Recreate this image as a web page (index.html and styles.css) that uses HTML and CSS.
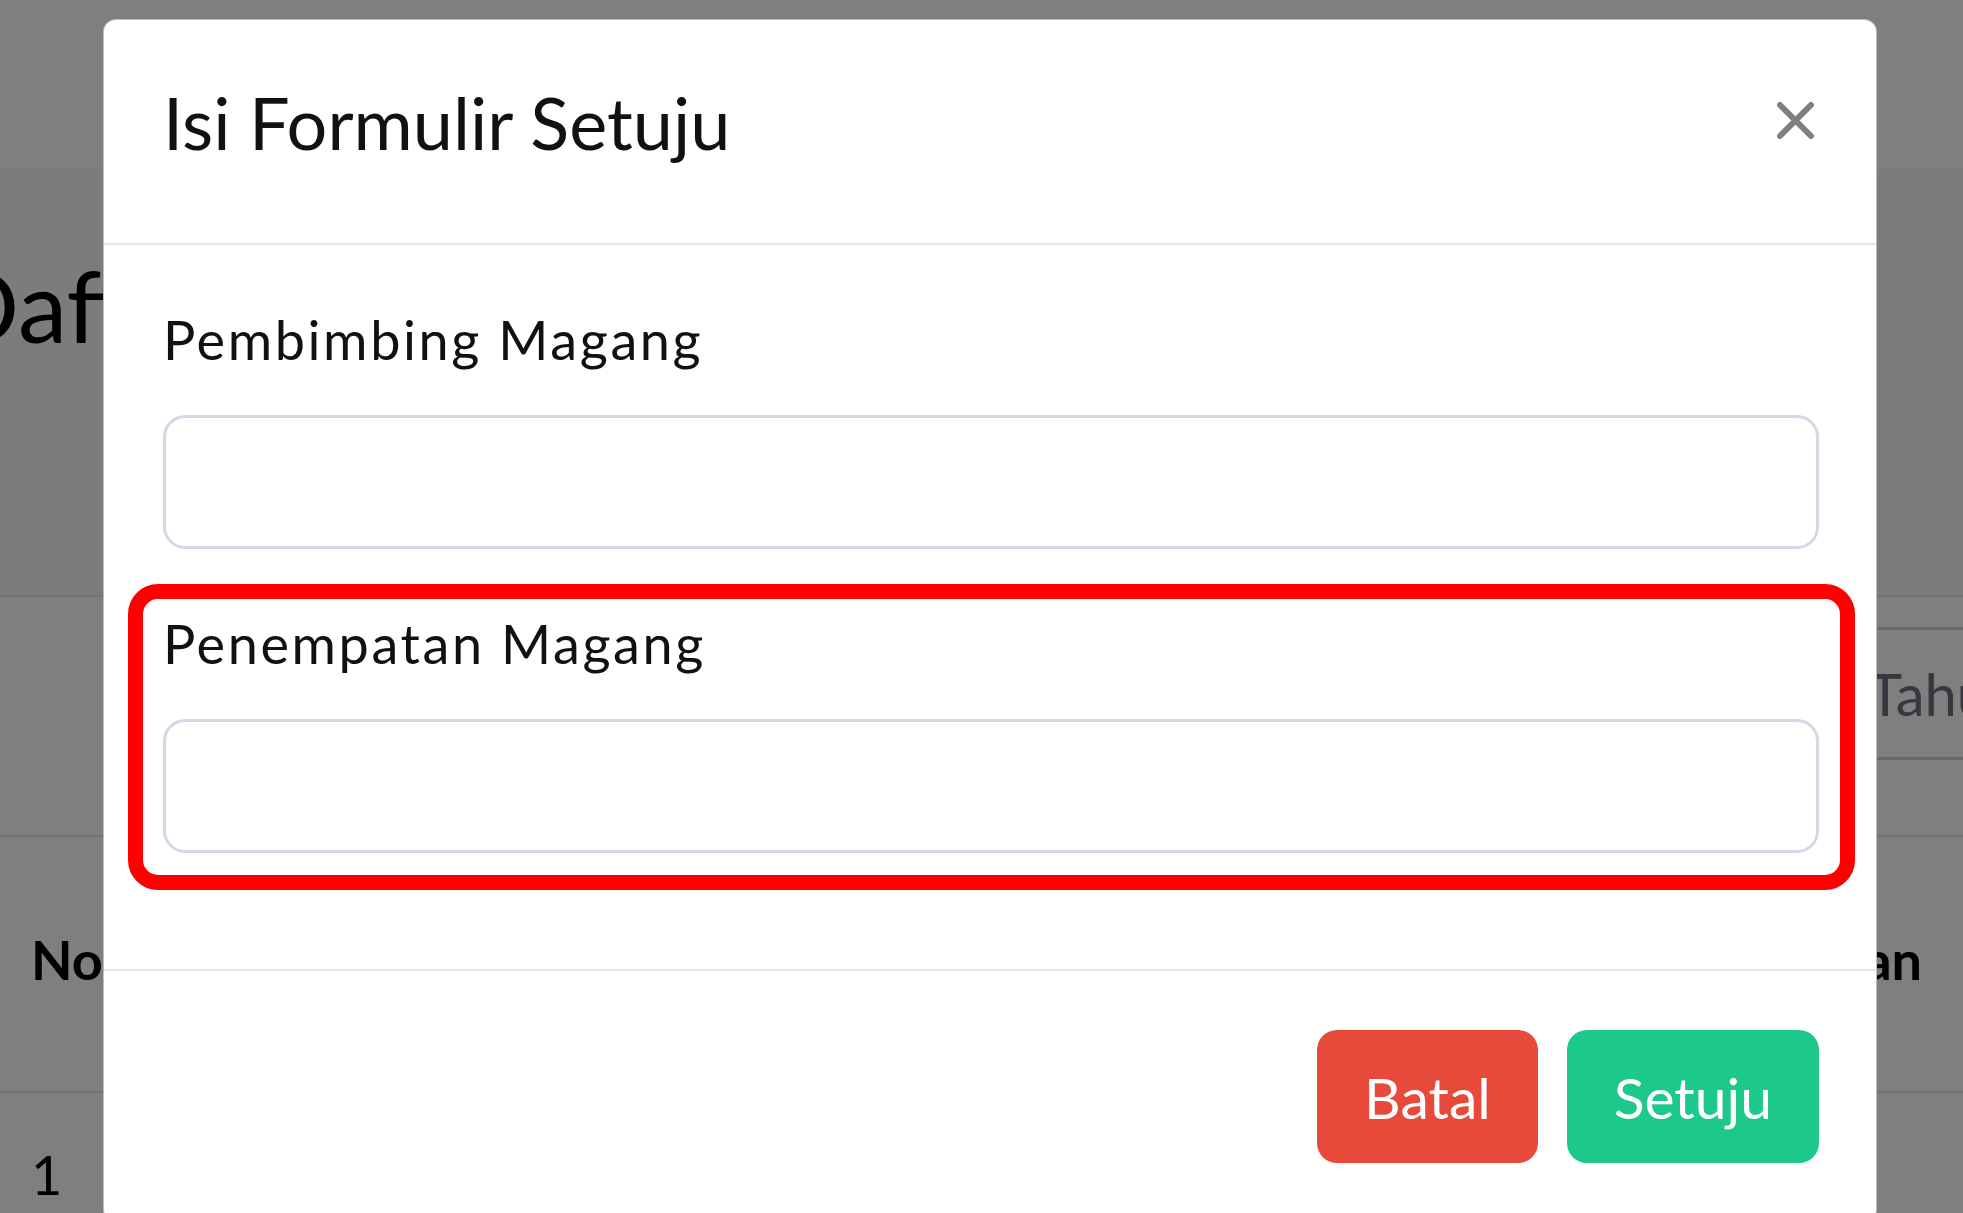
FILE: index.html
```html
<!DOCTYPE html>
<html lang="id">
<head>
<meta charset="utf-8">
<title>Isi Formulir Setuju</title>
<link rel="stylesheet" href="styles.css">
</head>
<body>
<div class="bg-page">
  <div class="topbar"></div>
  <div class="heading">
    <h1 class="page-title">Daftar Pengajuan Magang</h1>
  </div>
  <div class="card">
    <div class="card-filters">
      <div class="fake-select">Tahun</div>
    </div>
    <div class="table">
      <div class="thead">
        <div class="th th-no">No</div>
        <div class="th-spacer"></div>
        <div class="th th-last">Tindakan</div>
      </div>
      <div class="trow">
        <div class="td td-no">1</div>
      </div>
    </div>
  </div>
</div>

<div class="overlay">
  <div class="modal">
    <div class="modal-header">
      <h5 class="modal-title">Isi Formulir Setuju</h5>
      <button class="close" type="button" aria-label="Close">
        <svg width="37" height="37" viewBox="0 0 37 37"><path d="M3 3 L34 34 M34 3 L3 34" stroke="#7f7f7f" stroke-width="6" stroke-linecap="round" fill="none"/></svg>
      </button>
    </div>
    <div class="modal-body">
      <div class="form-group">
        <label class="form-label">Pembimbing Magang</label>
        <div class="form-control"></div>
      </div>
      <div class="highlight">
        <label class="form-label">Penempatan Magang</label>
        <div class="form-control"></div>
      </div>
    </div>
    <div class="modal-footer">
      <button class="btn btn-danger" type="button">Batal</button>
      <button class="btn btn-success" type="button">Setuju</button>
    </div>
  </div>
</div>
</body>
</html>
```

FILE: styles.css
```css
html, body {
  margin: 0;
  padding: 0;
  height: 100%;
  overflow: hidden;
}
body {
  font-family: Lato, "Open Sans", sans-serif;
  background: #f8f9fc;
  color: #000;
}

/* background page */
.bg-page {
  width: 2300px;
  margin-left: -56px;
}
.topbar {
  height: 169px;
  background: #fff;
}
.heading {
  height: 426px;
  padding-top: 77px;
  box-sizing: border-box;
}
.page-title {
  margin: 0;
  font-size: 99px;
  line-height: 1.2;
  font-weight: 400;
  color: #000;
  white-space: nowrap;
}
.card {
  background: #fff;
  border-top: 2px solid #e3e6f0;
  height: 700px;
}
.card-filters {
  display: flex;
  justify-content: flex-end;
  padding-top: 30px;
  height: 238px;
  box-sizing: border-box;
}
.fake-select {
  width: 376px;
  height: 133px;
  border-top: 3px solid #d1d3e2;
  border-bottom: 3px solid #d1d3e2;
  box-sizing: border-box;
  font-size: 58px;
  line-height: 127px;
  color: #6e707e;
}
.table {
  border-top: 2px solid #e3e6f0;
}
.thead {
  display: flex;
  align-items: center;
  height: 256px;
  padding-bottom: 10px;
  box-sizing: border-box;
  border-bottom: 2px solid #e3e6f0;
}
.th {
  font-weight: 700;
  font-size: 54px;
  color: #000;
}
.th-no { padding-left: 87px; }
.th-spacer { flex: 1; }
.th-last { padding-right: 322px; }
.trow {
  padding: 41px 0 43px 87px;
}
.td {
  font-size: 54px;
  line-height: 81px;
  color: #000;
}

/* overlay + modal */
.overlay {
  position: fixed;
  inset: 0;
  background: rgba(0, 0, 0, 0.5);
}
.modal {
  margin: 19px 0 0 103px;
  width: 1774px;
  box-sizing: border-box;
  background: #fff;
  border: 1px solid rgba(0, 0, 0, 0.25);
  border-radius: 13px;
}
.modal-header {
  display: flex;
  align-items: flex-start;
  padding: 48px 62px 67px 59px;
  border-bottom: 2px solid #e3e6f0;
}
.modal-title {
  margin: 0;
  font-size: 72px;
  line-height: 108px;
  font-weight: 400;
  color: #111;
}
.close {
  margin: 34px 0 0 auto;
  padding: 0;
  border: 0;
  background: none;
  width: 37px;
  height: 37px;
  display: block;
}
.close svg { display: block; }

.modal-body {
  padding: 54px 57px 79px 59px;
}
.form-group {
  margin-bottom: 35px;
}
.form-label {
  display: block;
  font-size: 54px;
  line-height: 81px;
  letter-spacing: 2.6px;
  margin-bottom: 35px;
  color: #111;
}
.form-control {
  height: 134px;
  box-sizing: border-box;
  border: 3px solid #d6d7e4;
  border-radius: 22px;
  background: #fff;
}
.highlight {
  border: 15px solid #ff0000;
  border-radius: 30px;
  margin: 0 -36px 0 -35px;
  padding: 4px 21px 22px 20px;
}

.modal-footer {
  display: flex;
  justify-content: flex-end;
  gap: 29px;
  padding: 59px 57px 58px 59px;
  border-top: 2px solid #e3e6f0;
}
.btn {
  height: 133px;
  padding: 0 47px;
  border: 0;
  border-radius: 20px;
  font-family: Lato, "Open Sans", sans-serif;
  font-size: 57px;
  color: #fff;
}
.btn-danger { background: #e74a3b; }
.btn-success { background: #1cc88a; }
```
